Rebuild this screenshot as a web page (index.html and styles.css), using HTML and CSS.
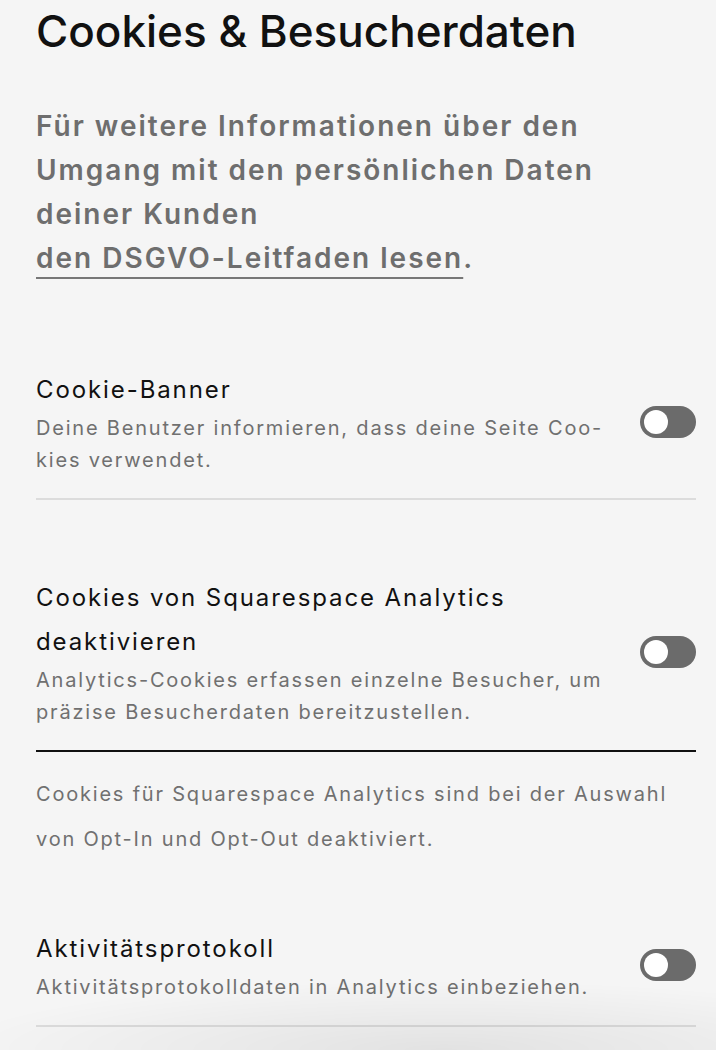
FILE: index.html
```html
<!DOCTYPE html>
<html lang="de">
<head>
<meta charset="utf-8">
<title>Cookies &amp; Besucherdaten</title>
<link rel="stylesheet" href="styles.css">
</head>
<body>
<main class="page">
  <h1 class="title">Cookies &amp; Besucherdaten</h1>
  <p class="intro">Für weitere Informationen über den<br>Umgang mit den persönlichen Daten<br>deiner Kunden<br><a class="intro-link" href="#">den DSGVO-Leitfaden lesen</a>.</p>

  <section class="row row-first">
    <div class="row-text">
      <div class="row-title">Cookie-Banner</div>
      <div class="row-desc">Deine Benutzer informieren, dass deine Seite Coo-<br>kies verwendet.</div>
    </div>
    <span class="toggle"><span class="knob"></span></span>
  </section>

  <section class="row row-second row-dark">
    <div class="row-text">
      <div class="row-title">Cookies von Squarespace Analytics<br>deaktivieren</div>
      <div class="row-desc">Analytics-Cookies erfassen einzelne Besucher, um<br>präzise Besucherdaten bereitzustellen.</div>
    </div>
    <span class="toggle"><span class="knob"></span></span>
  </section>

  <p class="note">Cookies für Squarespace Analytics sind bei der Auswahl<br>von Opt-In und Opt-Out deaktiviert.</p>

  <section class="row row-third">
    <div class="row-text">
      <div class="row-title">Aktivitätsprotokoll</div>
      <div class="row-desc">Aktivitätsprotokolldaten in Analytics einbeziehen.</div>
    </div>
    <span class="toggle"><span class="knob"></span></span>
  </section>
</main>
<div class="bottom-shade"></div>
</body>
</html>
```

FILE: styles.css
```css
html, body {
  margin: 0;
  padding: 0;
  background: #f5f5f5;
}

body {
  font-family: Inter, "Liberation Sans", sans-serif;
  color: #111;
}

.page {
  padding: 5px 20px 40px 36px;
}

.title {
  margin: 0;
  font-size: 44px;
  line-height: 52px;
  font-weight: 500;
  letter-spacing: 0;
  color: #111;
}

.intro {
  margin: 47px 0 0;
  font-size: 28px;
  line-height: 44px;
  font-weight: 600;
  letter-spacing: 2px;
  color: #6e6e6e;
}

.intro-link {
  color: #6e6e6e;
  text-decoration: underline;
  text-decoration-thickness: 2px;
  text-underline-offset: 9px;
  text-decoration-color: #777;
}

.row {
  display: flex;
  align-items: center;
  gap: 20px;
  padding-bottom: 22px;
  border-bottom: 2px solid #dcdcdc;
}

.row-first { margin-top: 88px; }
.row-second { margin-top: 76px; }
.row-third { margin-top: 65px; }

.row-dark { border-bottom-color: #111; }

.row-text {
  flex: 1;
  min-width: 0;
}

.row-title {
  font-size: 24px;
  line-height: 44px;
  letter-spacing: 1.9px;
  color: #111;
}

.row-desc {
  font-size: 20px;
  line-height: 32px;
  letter-spacing: 1.8px;
  color: #707070;
}

.note {
  margin: 20px 0 0;
  font-size: 20px;
  line-height: 45px;
  letter-spacing: 1.8px;
  color: #707070;
}

.toggle {
  flex: none;
  display: flex;
  align-items: center;
  width: 56px;
  height: 32px;
  padding: 0 4px;
  box-sizing: border-box;
  border-radius: 16px;
  background: #6b6b6b;
}

.knob {
  width: 24px;
  height: 24px;
  border-radius: 50%;
  background: #fff;
}

.bottom-shade {
  position: fixed;
  left: 0;
  right: 0;
  bottom: 0;
  height: 70px;
  pointer-events: none;
  background: radial-gradient(ellipse 70% 100% at 62% 100%, rgba(0,0,0,0.075), rgba(0,0,0,0) 100%);
}
```
